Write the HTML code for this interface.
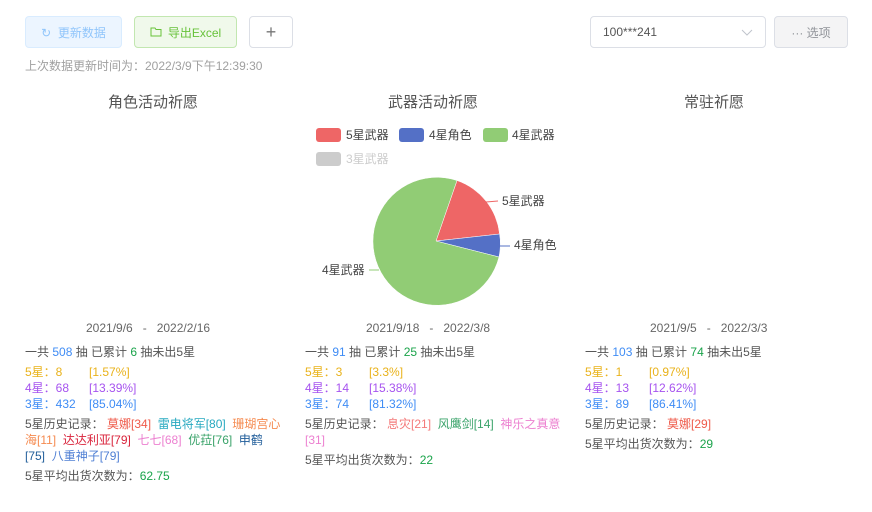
<!DOCTYPE html>
<html><head><meta charset="utf-8"><style>
*{margin:0;padding:0;box-sizing:border-box}
body{width:872px;height:512px;background:#fff;font-family:"Liberation Sans","Noto Sans CJK SC",sans-serif;color:#555;font-size:12px;position:relative;overflow:hidden}
.a{position:absolute;white-space:nowrap}
.btn{position:absolute;height:32px;border-radius:4px;font-size:12px;display:flex;align-items:center;justify-content:center}
.t{font-size:15px;color:#555}
.c{position:absolute;width:265px;font-size:12px;line-height:16px;white-space:normal}
.y{color:#e9b21a}.p{color:#a653ef}.b{color:#3f8cf5}.g{color:#1aa34a}
</style></head><body>
<div class="btn" style="left:25px;top:16px;width:97px;background:#ecf5ff;border:1px solid #d9ecff;color:#90c5fb">↻&nbsp; 更新数据</div>
<div class="btn" style="left:134px;top:16px;width:103px;background:#f0f9eb;border:1px solid #c2e7b0;color:#67c23a"><svg width="12" height="10" viewBox="0 0 12 10" style="margin-right:6px"><path d="M1 1h4l1 1.5h5v6.5H1z" fill="none" stroke="#67c23a"/></svg>导出Excel</div>
<div class="btn" style="left:249px;top:16px;width:44px;background:#fff;border:1px solid #dcdfe6;color:#777;font-size:18px">+</div>
<div class="a" style="left:25px;top:57px;color:#a0a0a0;font-size:12px">上次数据更新时间为：2022/3/9下午12:39:30</div>
<div class="btn" style="left:590px;top:16px;width:176px;background:#fff;border:1px solid #dcdfe6;color:#555;justify-content:flex-start;padding-left:12px">100***241<svg style="position:absolute;right:12px;top:12px" width="12" height="7"><path d="M1 1l5 5 5-5" fill="none" stroke="#c0c4cc"/></svg></div>
<div class="btn" style="left:774px;top:16px;width:74px;background:#f4f4f5;border:1px solid #dcdfe6;color:#909399">··· 选项</div>

<div class="a t" style="left:108px;top:91px">角色活动祈愿</div>
<div class="a t" style="left:388px;top:91px">武器活动祈愿</div>
<div class="a t" style="left:684px;top:91px">常驻祈愿</div>

<svg class="a" style="left:0;top:0" width="872" height="320">
<g font-size="12" fill="#444">
<rect x="316" y="128" width="25" height="14" rx="3" fill="#ee6666"/><text x="346" y="139">5星武器</text>
<rect x="399" y="128" width="25" height="14" rx="3" fill="#5470c6"/><text x="429" y="139">4星角色</text>
<rect x="483" y="128" width="25" height="14" rx="3" fill="#91cc75"/><text x="512" y="139">4星武器</text>
<rect x="316" y="152" width="25" height="14" rx="3" fill="#ccc"/><text x="346" y="163" fill="#ccc">3星武器</text>
</g>
<path d="M436 241L457 180.5A64 64 0 0 1 499.6 234Z" fill="#ee6666" stroke="#fff" stroke-width=".5"/>
<path d="M436 241L499.6 234A64 64 0 0 1 499 257Z" fill="#5470c6" stroke="#fff" stroke-width=".5"/>
<path d="M436 241L499 257A64 64 0 1 1 457 180.5Z" fill="#91cc75" stroke="#fff" stroke-width=".5"/>
<path d="M486 202L498 201" stroke="#ee6666"/><path d="M500 246L510 246" stroke="#5470c6"/><path d="M369 270L379 270" stroke="#91cc75"/>
<g font-size="12" fill="#444"><text x="502" y="205">5星武器</text><text x="514" y="249">4星角色</text><text x="322" y="274">4星武器</text></g>
</svg>

<div class="a" style="left:86px;top:321px;color:#666">2021/9/6 &nbsp; - &nbsp; 2022/2/16</div>
<div class="a" style="left:366px;top:321px;color:#666">2021/9/18 &nbsp; - &nbsp; 2022/3/8</div>
<div class="a" style="left:650px;top:321px;color:#666">2021/9/5 &nbsp; - &nbsp; 2022/3/3</div>

<div class="c" style="left:25px;top:344px;width:257px">
<div>一共 <span class="b">508</span> 抽 已累计 <span class="g">6</span> 抽未出5星</div>
<div style="margin-top:4px" class="y">5星：8 &nbsp; &nbsp; &nbsp; &nbsp;[1.57%]</div>
<div class="p">4星：68 &nbsp; &nbsp; &nbsp;[13.39%]</div>
<div class="b">3星：432 &nbsp; &nbsp;[85.04%]</div>
<div style="margin-top:4px">5星历史记录： <span style="color:#ef5a4a">莫娜[34]</span>&nbsp; <span style="color:#27a9c0">雷电将军[80]</span>&nbsp; <span style="color:#f58a4f">珊瑚宫心海[11]</span>&nbsp; <span style="color:#d9233b">达达利亚[79]</span>&nbsp; <span style="color:#ec7fd0">七七[68]</span>&nbsp; <span style="color:#3aa36a">优菈[76]</span>&nbsp; <span style="color:#1f5c99">申鹤 [75]</span>&nbsp; <span style="color:#4f7fd4">八重神子[79]</span></div>
<div style="margin-top:4px">5星平均出货次数为：<span class="g">62.75</span></div>
</div>
<div class="c" style="left:305px;top:344px">
<div>一共 <span class="b">91</span> 抽 已累计 <span class="g">25</span> 抽未出5星</div>
<div style="margin-top:4px" class="y">5星：3 &nbsp; &nbsp; &nbsp; &nbsp;[3.3%]</div>
<div class="p">4星：14 &nbsp; &nbsp; &nbsp;[15.38%]</div>
<div class="b">3星：74 &nbsp; &nbsp; &nbsp;[81.32%]</div>
<div style="margin-top:4px">5星历史记录： <span style="color:#f47a7a">息灾[21]</span>&nbsp; <span style="color:#3aa36a">风鹰剑[14]</span>&nbsp; <span style="color:#ec7fd0">神乐之真意[31]</span></div>
<div style="margin-top:4px">5星平均出货次数为：<span class="g">22</span></div>
</div>
<div class="c" style="left:585px;top:344px">
<div>一共 <span class="b">103</span> 抽 已累计 <span class="g">74</span> 抽未出5星</div>
<div style="margin-top:4px" class="y">5星：1 &nbsp; &nbsp; &nbsp; &nbsp;[0.97%]</div>
<div class="p">4星：13 &nbsp; &nbsp; &nbsp;[12.62%]</div>
<div class="b">3星：89 &nbsp; &nbsp; &nbsp;[86.41%]</div>
<div style="margin-top:4px">5星历史记录： <span style="color:#ef5a4a">莫娜[29]</span></div>
<div style="margin-top:4px">5星平均出货次数为：<span class="g">29</span></div>
</div>
</body></html>
